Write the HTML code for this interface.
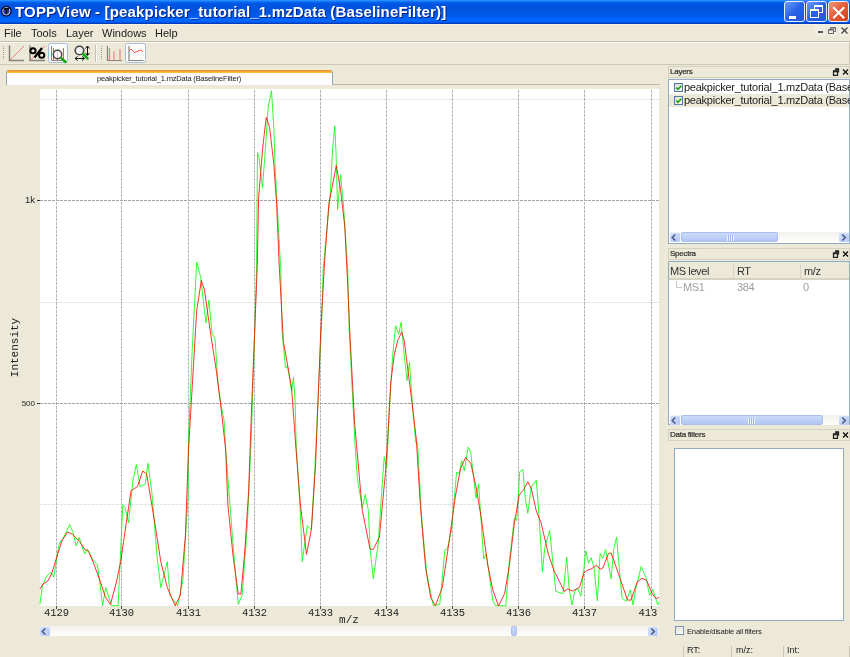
<!DOCTYPE html>
<html><head><meta charset="utf-8">
<style>
*{margin:0;padding:0;box-sizing:border-box}
html,body{width:850px;height:657px;overflow:hidden;background:#ECE9D8;font-family:"Liberation Sans",sans-serif;position:relative}
.abs{position:absolute}
.txt{white-space:nowrap;will-change:transform}
#title{left:0;top:0;width:850px;height:24px;background:linear-gradient(#3D95FF 0px,#0A78FF 1.5px,#0058E6 3px,#0054DF 5px,#0055E0 12px,#005DF0 17px,#0066FF 19px,#0066FF 21.5px,#0048D0 23px,#0030A8 24px)}
#title .t{will-change:transform;left:15px;top:3px;color:#fff;font-weight:bold;font-size:15px;letter-spacing:0.16px;white-space:nowrap;text-shadow:1px 1px 0 #0a1e7a}
.wb{position:absolute;top:1px;width:21px;height:21px;border:1px solid #E8EEFA;border-radius:3px}
#menu{left:0;top:24px;width:850px;height:18px;background:#ECE9D8;border-top:1px solid #F6F2DF;border-bottom:1px solid #C5C2B2}
#menu span{will-change:transform;position:absolute;top:2px;font-size:11px;color:#222}
#tool{left:0;top:42px;width:850px;height:23px;background:#ECE9D8;border-top:1px solid #F8F6EE;border-bottom:1px solid #CDC9B6;border-right:1px solid #CDC9B6}
.dock{position:absolute;left:668px;width:182px;height:12px;background:#ECE9D8;border:1px solid #D5D1C0;font-size:8px;color:#222}
.dock span{will-change:transform;position:absolute;left:0.5px;top:-0.5px;font-size:8px;letter-spacing:-0.25px;color:#2a2a2a;-webkit-text-stroke:0.2px #2a2a2a}
.frame{position:absolute;background:#fff;border:1px solid #94ABC6}
.hsb{position:absolute;height:10px;background:linear-gradient(#F3F1EC,#FEFEFB)}
.arr{position:absolute;top:0.5px;width:9.5px;height:9px;background:linear-gradient(135deg,#D5E1FC,#B5C8F6);border-radius:1.5px}
.cb{position:absolute;width:9px;height:9px;border:1px solid #4F78A8;background:linear-gradient(135deg,#DDDDD5,#FAFAF7)}
.lt{font-size:11px;color:#222;letter-spacing:-0.25px}
.hd{font-size:11px;color:#333;letter-spacing:-0.4px}
.thumb{position:absolute;top:0;height:10px;background:linear-gradient(#CCDAF8,#B2C7F5);border:1px solid #A9BEE9;border-radius:2px}
</style></head><body>
<div id="title" class="abs">
  <svg class="abs" style="left:0;top:5px" width="13" height="13"><circle cx="6.3" cy="6.2" r="4.9" fill="#2a3aa8" stroke="#0a0c30" stroke-width="1.2"/><circle cx="6.3" cy="6.2" r="3.6" fill="none" stroke="#D8DDF5" stroke-width="0.9"/><path d="M3.6 3.9H9M6.3 3.9V9.2" stroke="#111" stroke-width="1.6"/></svg>
  <div class="abs t">TOPPView - [peakpicker_tutorial_1.mzData (BaselineFilter)]</div>
  <div class="wb" style="left:784px;background:linear-gradient(135deg,#6C9BFB,#2A63E8 50%,#1F54D8)"><div class="abs" style="left:4px;top:13.5px;width:7px;height:3px;background:#fff"></div></div>
  <div class="wb" style="left:806px;background:linear-gradient(135deg,#6C9BFB,#2A63E8 50%,#1F54D8)"><div class="abs" style="left:7px;top:3px;width:9px;height:8px;border:1px solid #fff;border-top-width:2px"></div><div class="abs" style="left:3px;top:7px;width:9px;height:9px;border:1px solid #fff;border-top-width:2px;background:#2A60E6"></div></div>
  <div class="wb" style="left:828px;background:linear-gradient(135deg,#F09A7C,#E25B34 50%,#D1421B)"><svg class="abs" style="left:3px;top:3.5px" width="14" height="14"><path d="M1.2 1.2L12.2 12.2M12.2 1.2L1.2 12.2" stroke="#fff" stroke-width="2"/></svg></div>
</div>
<div id="menu" class="abs">
  <span style="left:4px">File</span>
  <span style="left:31px">Tools</span>
  <span style="left:66px">Layer</span>
  <span style="left:102px">Windows</span>
  <span style="left:155px">Help</span>
</div>
<!-- mdi buttons -->
<div class="abs" style="left:815px;top:25px;width:10px;height:11px;background:#F1EFE4"><div class="abs" style="left:2.5px;top:6px;width:5px;height:1.6px;background:#555"></div></div>
<div class="abs" style="left:827px;top:25px;width:10px;height:11px;background:#F1EFE4"><svg class="abs" style="left:1px;top:2px" width="8" height="7"><path d="M2.5 2V.5h5v4H6M.5 2.5h5v4h-5z" fill="none" stroke="#666"/><path d="M.5 3h5M2.5 1h5" stroke="#666"/></svg></div>
<div class="abs" style="left:839px;top:25px;width:10px;height:11px;background:#F1EFE4"><svg class="abs" style="left:2px;top:2px" width="7" height="7"><path d="M.5.5l6 6M6.5.5l-6 6" stroke="#444" stroke-width="1.3"/></svg></div>
<div id="tool" class="abs"></div>

<!-- toolbar -->
<svg class="abs" style="left:0;top:43px" width="160" height="22">
  <g fill="#9c9a90"><rect x="3" y="3" width="1" height="1"/><rect x="3" y="5" width="1" height="1"/><rect x="3" y="7" width="1" height="1"/><rect x="3" y="9" width="1" height="1"/><rect x="3" y="11" width="1" height="1"/><rect x="3" y="13" width="1" height="1"/><rect x="3" y="15" width="1" height="1"/>
  <rect x="101" y="3" width="1" height="1"/><rect x="101" y="5" width="1" height="1"/><rect x="101" y="7" width="1" height="1"/><rect x="101" y="9" width="1" height="1"/><rect x="101" y="11" width="1" height="1"/><rect x="101" y="13" width="1" height="1"/><rect x="101" y="15" width="1" height="1"/></g>
  <!-- icon1 -->
  <path d="M9.5 2.5V17.5H24" stroke="#85837a" stroke-width="1.5" fill="none"/>
  <path d="M10 17L24 3" stroke="#F08080" stroke-width="1"/>
  <!-- icon2 -->
  <path d="M30 2.5V17.5H45" stroke="#85837a" stroke-width="1.5" fill="none"/>
  <path d="M30.5 17L45 3" stroke="#F08080" stroke-width="1"/>
  <ellipse cx="33" cy="7.8" rx="2.6" ry="2.5" fill="none" stroke="#000" stroke-width="2"/><ellipse cx="41.7" cy="12.2" rx="2.6" ry="2.5" fill="none" stroke="#000" stroke-width="2"/><path d="M34.5 14.5L42 5" stroke="#000" stroke-width="2.2"/>
  <!-- icon3 checked -->
  <rect x="48.5" y="0.5" width="19" height="19" rx="2" fill="#FBFBF9" stroke="#A6BCD8"/>
  <path d="M51.5 3V17.5H66" stroke="#85837a" stroke-width="1" fill="none"/>
  <path d="M53.5 5V17M57.5 9V17M63.5 5V17" stroke="#F05050" stroke-width="1"/>
  <circle cx="57.5" cy="11.5" r="4.2" fill="rgba(255,255,255,0.6)" stroke="#444" stroke-width="1.5"/>
  <path d="M61 15L65.5 19" stroke="#11AA11" stroke-width="2.5" stroke-linecap="round"/>
  <!-- icon4 -->
  <circle cx="79.5" cy="7.5" r="4.3" fill="#f2f2f2" stroke="#444" stroke-width="1.6"/>
  <path d="M83 11L87.5 15.5" stroke="#11AA11" stroke-width="2.5" stroke-linecap="round"/>
  <path d="M87.5 3.5V12M85.5 5.5L87.5 3L89.5 5.5M85.5 10L87.5 12.5L89.5 10" stroke="#111" stroke-width="1" fill="none"/>
  <path d="M75.5 15.5H84M77.5 13.5L75 15.5L77.5 17.5M82 13.5L84.5 15.5L82 17.5" stroke="#111" stroke-width="1" fill="none"/>
  <!-- separator -->
  <rect x="95" y="2" width="1" height="17" fill="#C5C2B2"/><rect x="96" y="2" width="1" height="17" fill="#fff"/>
  <!-- icon5 -->
  <path d="M107.5 3V17.5H122" stroke="#85837a" stroke-width="1.2" fill="none"/>
  <path d="M109.5 5V17M114 8.5V17M120 6V17" stroke="#F08080" stroke-width="1.2"/>
  <!-- icon6 checked -->
  <rect x="125.5" y="0.5" width="20" height="19" rx="2" fill="#FBFBF9" stroke="#A6BCD8"/>
  <path d="M129 3V17.5H143.5" stroke="#85837a" stroke-width="1.2" fill="none"/>
  <path d="M129.5 7.5L131 6L134.5 9.5L141 7L143 9" stroke="#F05050" stroke-width="1" fill="none"/>
</svg>
<svg class="abs" style="left:0;top:0" width="850" height="657">
<rect x="40" y="89" width="619" height="517" fill="#fff"/>
<path d="M40 99.5H659" stroke="#E4E4E4" stroke-dasharray="3 1"/>
<path d="M40 302.5H659" stroke="#E4E4E4" stroke-dasharray="3 1"/>
<path d="M40 504.5H659" stroke="#E4E4E4" stroke-dasharray="3 1"/>
<path d="M40 200.5H659" stroke="#A4A4A4" stroke-dasharray="3 1"/>
<path d="M37 200.5H40" stroke="#333"/>
<path d="M40 403.5H659" stroke="#A4A4A4" stroke-dasharray="3 1"/>
<path d="M37 403.5H40" stroke="#333"/>
<path d="M56.5 90V606" stroke="#B4B4B4" stroke-dasharray="3 1"/>
<path d="M56.5 606V609" stroke="#444"/>
<path d="M121.5 90V606" stroke="#B4B4B4" stroke-dasharray="3 1"/>
<path d="M121.5 606V609" stroke="#444"/>
<path d="M188.5 90V606" stroke="#B4B4B4" stroke-dasharray="3 1"/>
<path d="M188.5 606V609" stroke="#444"/>
<path d="M254.5 90V606" stroke="#B4B4B4" stroke-dasharray="3 1"/>
<path d="M254.5 606V609" stroke="#444"/>
<path d="M320.5 90V606" stroke="#B4B4B4" stroke-dasharray="3 1"/>
<path d="M320.5 606V609" stroke="#444"/>
<path d="M386.5 90V606" stroke="#B4B4B4" stroke-dasharray="3 1"/>
<path d="M386.5 606V609" stroke="#444"/>
<path d="M452.5 90V606" stroke="#B4B4B4" stroke-dasharray="3 1"/>
<path d="M452.5 606V609" stroke="#444"/>
<path d="M518.5 90V606" stroke="#B4B4B4" stroke-dasharray="3 1"/>
<path d="M518.5 606V609" stroke="#444"/>
<path d="M584.5 90V606" stroke="#B4B4B4" stroke-dasharray="3 1"/>
<path d="M584.5 606V609" stroke="#444"/>
<path d="M651.5 90V606" stroke="#B4B4B4" stroke-dasharray="3 1"/>
<path d="M651.5 606V609" stroke="#444"/>
<polyline points="40,604 42.4,586 46,577 50.9,572 53.9,577 58.8,545 60.8,541 63.8,537 69.7,524.6 72.7,531.5 76.2,546 79.2,537.4 84.6,554 87.5,549 92.5,559 97.4,565 99.4,579 102.6,605.7 105.7,587.6 111.7,605.7 118.1,605.7 122.8,504.7 125.1,507.7 128.5,522.9 133,480 136.3,464.6 140.1,486.6 145.3,484 147.9,463.3 151.8,491.8 157,556.5 160.8,587.6 167.3,561.7 169.9,595.4 177.7,605.7 182.9,579.8 188,497 188.5,438.7 192.2,350.5 196.7,262.2 200.7,277.4 205.9,323 208.9,300.2 212,333.7 215,338.3 218,384 221.1,405.3 224.1,420.5 225.7,450 234.4,561.6 238.3,604.3 242.2,595.2 247.3,525.4 251.2,440 254.6,333.5 256.5,270 257.5,152.6 259.1,158.2 262.5,187.8 265.9,141.3 268.2,107.5 271.5,90.6 273.8,127.2 275.2,169.5 278,220.2 280.8,270 282,330.8 285.5,367.7 287.5,366.4 291.6,391 293.5,377.3 295.1,402 296.2,445 300.4,512.4 302.2,561.6 307.3,525.5 311.4,529.6 314.7,472 321.7,320 323.1,270 330.4,192 332.5,150 334.8,126 336.1,154.5 337.6,209.4 340.5,174.7 343.4,203.6 347.7,270 349.2,330 355,444.6 357.4,478.7 362.3,507.9 365.2,494.5 368.4,510.4 370.1,549.3 373.3,578.6 378.1,544.5 381.8,490.9 384.2,456.8 386.6,468.3 389.5,407.4 392.6,356.3 395.6,325.8 398.7,334.4 401.2,322.2 404.1,353.8 407,380.6 409.5,362.4 412.6,407.4 415.8,442.7 417.5,442.7 421.6,517.6 426.8,574.5 433.3,605.6 439.8,604.3 444.9,550 447.5,548.7 451.4,530.6 456.6,472.3 459.2,473.6 461.7,460.7 464.3,471 468.2,447.2 470.8,452.9 476,498.2 478.6,484 483.7,559 486.3,553.8 492.8,600.4 495.4,605.6 505.8,605.9 509.5,559.6 514.4,518.2 516.8,520.6 519.7,471.9 522.9,469.5 525.3,498.7 527.8,513.3 531.4,486.5 536.3,480.4 538.7,510.9 542.4,571.8 544.8,547.4 549.7,530.4 553.3,566.9 555.8,591.3 563.1,593.7 566.7,557.2 569.2,588.8 572,605 574.8,591.2 577.5,588.5 581,596 585.8,550.8 588.5,563.2 591.2,557.7 594,568 597.4,600.8 600.1,553.6 602.9,558.4 605.6,549.5 611.1,578.9 613.8,548.8 616.6,537.1 618.6,561.1 622.1,598 626.2,601.5 630.3,589.9 633,604.9 635.8,588.5 641.2,566.6 646,577.5 649.5,595.3 652.9,589.2 657.7,604.9 659,602" fill="none" stroke="#00FF00" stroke-width="0.8"/>
<polyline points="40,588.9 43,584 47.9,581 51.9,573 56.8,557 61.8,541 67.7,532 72.7,534.5 79.6,541.4 84.6,549.3 88.5,551.3 93.5,563 99.4,579 105.3,596.8 110.4,604.4 116.2,583 120.7,561.7 125.9,525.4 131.1,490.5 137.5,486.6 142.7,471 146.6,473.7 154.4,520.3 160.8,561.7 167.3,587.6 175.1,605.7 180.3,595.4 185.4,535.8 188.5,450 192.2,387 196.7,310.9 201.3,280.4 204.4,289.6 210.4,332.2 216.5,371.8 221.1,408.3 225.7,450 227.9,504.7 233.1,556.4 238.3,594 240.9,594 244.8,551.3 248.6,491.7 251.8,402 254.6,333.5 257.3,265 258.6,197.6 262.8,147 266.2,117.4 269.6,127.2 273.8,163.9 276.6,203.3 279.2,265 283.4,341.7 288.8,371.8 291.6,388.3 295.7,445 300.4,504.7 306.5,554.3 311.4,529.6 315.6,463.9 320.8,330 324.6,261.5 328.9,203.6 336.3,165.5 340.5,189.2 344.8,226.8 347.7,284.6 349.7,330 354.6,422.8 362.3,510.4 370.1,549.3 373.3,549.3 379.4,537.2 383,498.2 385.4,473.8 387.9,434.9 390.7,383 394.4,353.8 397.8,340.5 401.7,331.9 404.3,341 406.5,358.7 411.4,397.7 416.3,439 420.3,504.7 425.5,566.8 430.7,597.8 435.4,605.6 442.3,587.5 448.8,543.5 455.3,496.9 460.5,468.5 465.6,457.6 470.8,463.3 476,486.6 481.2,517.6 487.6,564.2 492.8,590 498.5,605.9 504.6,593.7 509.5,564.5 514.4,523 519.2,495 524.1,489 527.8,481.7 531.4,489 536.3,510.9 541.1,523 548.5,554.7 554.5,571.8 559.4,581.5 564.3,591.3 567.9,588.8 572.7,591.2 579.6,587.1 583.7,573.4 586.4,570.7 591.9,568.6 596.7,565.2 600.1,569.3 602.9,567.9 608.4,553.6 611.1,552.9 617.9,572.1 622.1,584.4 627.5,600.1 631,600.1 637.1,582.3 641.9,578.2 646.7,580.3 652.2,594 656.3,598.8 659,597.4" fill="none" stroke="#FF0000" stroke-width="0.8"/>
</svg>
<svg class="abs" style="left:0;top:0;will-change:transform" width="850" height="657">
<text x="56.5" y="616" text-anchor="middle" font-family="Liberation Mono" font-size="10.5" fill="#222">4129</text>
<text x="121.5" y="616" text-anchor="middle" font-family="Liberation Mono" font-size="10.5" fill="#222">4130</text>
<text x="188.5" y="616" text-anchor="middle" font-family="Liberation Mono" font-size="10.5" fill="#222">4131</text>
<text x="254.5" y="616" text-anchor="middle" font-family="Liberation Mono" font-size="10.5" fill="#222">4132</text>
<text x="320.5" y="616" text-anchor="middle" font-family="Liberation Mono" font-size="10.5" fill="#222">4133</text>
<text x="386.5" y="616" text-anchor="middle" font-family="Liberation Mono" font-size="10.5" fill="#222">4134</text>
<text x="452.5" y="616" text-anchor="middle" font-family="Liberation Mono" font-size="10.5" fill="#222">4135</text>
<text x="518.5" y="616" text-anchor="middle" font-family="Liberation Mono" font-size="10.5" fill="#222">4136</text>
<text x="584.5" y="616" text-anchor="middle" font-family="Liberation Mono" font-size="10.5" fill="#222">4137</text>
<text x="638.5" y="616" text-anchor="start" font-family="Liberation Mono" font-size="10.5" fill="#222">413</text>
<text x="349" y="622.5" text-anchor="middle" font-family="Liberation Mono" font-size="11" fill="#222">m/z</text>
<text x="35" y="203.3" text-anchor="end" font-family="Liberation Sans" font-size="9.5" fill="#222">1k</text>
<text x="35" y="406" text-anchor="end" font-family="Liberation Sans" font-size="8" fill="#222">500</text>
<text transform="translate(17.5 347.5) rotate(-90)" text-anchor="middle" font-family="Liberation Mono" font-size="11" fill="#222">Intensity</text>
</svg>
<!-- tab -->
<div class="abs" style="left:6px;top:70px;width:327px;height:15px;background:#FCFCFE;border-left:1px solid #91A7B4;border-right:1px solid #91A7B4;border-radius:3px 3px 0 0;overflow:hidden">
  <div class="abs" style="left:0;top:0;width:100%;height:3px;background:linear-gradient(#E68B2C,#FFC73C)"></div>
  <div class="abs txt" style="left:90px;top:3.5px;font-size:7.5px;letter-spacing:-0.17px;color:#222">peakpicker_tutorial_1.mzData (BaselineFilter)</div>
</div>
<div class="abs" style="left:333px;top:84px;width:327px;height:1px;background:#BDB9A5"></div>
<!-- docks -->
<div class="dock" style="top:66px"><span>Layers</span><svg class="abs" style="left:163px;top:1px" width="17" height="8"><path d="M1.5 3.5h4v4h-4z M3.5 1.5h3v3" fill="none" stroke="#222" stroke-width="1.3"/><path d="M1 3h5M3 1h4" stroke="#222" stroke-width="1.5"/><path d="M11 1.5l5 5M16 1.5l-5 5" stroke="#111" stroke-width="1.3"/></svg></div>
<div class="frame" style="left:668px;top:79px;width:182px;height:165px">
  <div class="abs" style="left:0;top:14px;width:180px;height:13px;background:#ECE9D8"></div>
  <div class="cb" style="left:5px;top:3px"><svg class="abs" style="left:0;top:0" width="8" height="8"><path d="M1.3 3.6L2.9 5.3L6.3 1.8" fill="none" stroke="#21A121" stroke-width="1.7"/></svg></div>
  <div class="abs txt lt" style="left:15px;top:1px">peakpicker_tutorial_1.mzData (BaselineFilter)</div>
  <div class="cb" style="left:5px;top:16px"><svg class="abs" style="left:0;top:0" width="8" height="8"><path d="M1.3 3.6L2.9 5.3L6.3 1.8" fill="none" stroke="#21A121" stroke-width="1.7"/></svg></div>
  <div class="abs txt lt" style="left:15px;top:14px">peakpicker_tutorial_1.mzData (BaselineFilter)</div>
  <div class="hsb" style="left:1px;top:152px;width:179px">
    <div class="arr" style="left:0px"><svg width="9" height="9" style="position:absolute;left:0;top:0"><path d="M5.3 1.5L2.3 4.5L5.3 7.5" fill="none" stroke="#4A5F8A" stroke-width="1.7"/></svg></div>
    <div class="thumb" style="left:11px;width:97px"><svg style="position:absolute;left:45px;top:2px" width="7" height="6"><path d="M0.5 0V6M2.5 0V6M4.5 0V6M6.5 0V6" stroke="#EEF3FE" stroke-width="1"/><path d="M1.5 0V6M3.5 0V6M5.5 0V6" stroke="#9DB6EA" stroke-width="1"/></svg></div>
    <div class="arr" style="left:169px"><svg width="9" height="9" style="position:absolute;left:0;top:0"><path d="M3.2 1.5L6.2 4.5L3.2 7.5" fill="none" stroke="#4A5F8A" stroke-width="1.7"/></svg></div>
  </div>
</div>
<div class="dock" style="top:248px"><span>Spectra</span><svg class="abs" style="left:163px;top:1px" width="17" height="8"><path d="M1.5 3.5h4v4h-4z M3.5 1.5h3v3" fill="none" stroke="#222" stroke-width="1.3"/><path d="M1 3h5M3 1h4" stroke="#222" stroke-width="1.5"/><path d="M11 1.5l5 5M16 1.5l-5 5" stroke="#111" stroke-width="1.3"/></svg></div>
<div class="frame" style="left:668px;top:261px;width:182px;height:164px">
  <div class="abs" style="left:0;top:0;width:180px;height:18px;background:#ECE9D8;border-bottom:2px solid #D6D2C2"></div>
  <div class="abs" style="left:64px;top:3px;width:1px;height:13px;background:#D6D2C2"></div>
  <div class="abs" style="left:131px;top:3px;width:1px;height:13px;background:#D6D2C2"></div>
  <div class="abs txt hd" style="left:1px;top:3px">MS level</div>
  <div class="abs txt hd" style="left:68px;top:3px">RT</div>
  <div class="abs txt hd" style="left:135px;top:3px">m/z</div>
  <div class="abs" style="left:7px;top:19px;width:1px;height:7px;border-left:1px solid #C8C8C8"></div>
  <div class="abs" style="left:7px;top:25px;width:6px;height:1px;border-top:1px solid #C8C8C8"></div>
  <div class="abs txt hd" style="left:14px;top:19px;color:#A0A0A0">MS1</div>
  <div class="abs txt hd" style="left:68px;top:19px;color:#A0A0A0">384</div>
  <div class="abs txt hd" style="left:134px;top:19px;color:#A0A0A0">0</div>
  <div class="hsb" style="left:1px;top:153px;width:179px">
    <div class="arr" style="left:0px"><svg width="9" height="9" style="position:absolute;left:0;top:0"><path d="M5.3 1.5L2.3 4.5L5.3 7.5" fill="none" stroke="#4A5F8A" stroke-width="1.7"/></svg></div>
    <div class="thumb" style="left:11px;width:142px"><svg style="position:absolute;left:66px;top:2px" width="7" height="6"><path d="M0.5 0V6M2.5 0V6M4.5 0V6M6.5 0V6" stroke="#EEF3FE" stroke-width="1"/><path d="M1.5 0V6M3.5 0V6M5.5 0V6" stroke="#9DB6EA" stroke-width="1"/></svg></div>
    <div class="arr" style="left:169px"><svg width="9" height="9" style="position:absolute;left:0;top:0"><path d="M3.2 1.5L6.2 4.5L3.2 7.5" fill="none" stroke="#4A5F8A" stroke-width="1.7"/></svg></div>
  </div>
</div>
<div class="dock" style="top:429px"><span>Data filters</span><svg class="abs" style="left:163px;top:1px" width="17" height="8"><path d="M1.5 3.5h4v4h-4z M3.5 1.5h3v3" fill="none" stroke="#222" stroke-width="1.3"/><path d="M1 3h5M3 1h4" stroke="#222" stroke-width="1.5"/><path d="M11 1.5l5 5M16 1.5l-5 5" stroke="#111" stroke-width="1.3"/></svg></div>
<div class="frame" style="left:674px;top:448px;width:170px;height:173px"></div>
<div class="abs" style="left:675px;top:626px;width:9px;height:9px;border:1px solid #7C94B4;background:linear-gradient(135deg,#E3E2DA,#FBFBF8)"></div>
<div class="abs txt" style="left:687px;top:627px;font-size:7.6px;color:#222;letter-spacing:-0.2px">Enable/disable all filters</div>
<div class="abs" style="left:683px;top:646px;width:1px;height:11px;background:#C9C5B2"></div>
<div class="abs" style="left:731px;top:646px;width:1px;height:11px;background:#C9C5B2"></div>
<div class="abs" style="left:783px;top:646px;width:1px;height:11px;background:#C9C5B2"></div>
<div class="abs" style="left:849px;top:646px;width:1px;height:11px;background:#C9C5B2"></div>
<div class="abs txt" style="left:687px;top:645px;font-size:9px;color:#222">RT:</div>
<div class="abs txt" style="left:736px;top:645px;font-size:9px;color:#222">m/z:</div>
<div class="abs txt" style="left:787px;top:645px;font-size:9px;color:#222">Int:</div>
<!-- main hscroll -->
<div class="hsb" style="left:40px;top:626px;width:619px">
  <div class="arr" style="left:0"><svg width="9" height="9" style="position:absolute;left:0;top:0"><path d="M5.3 1.5L2.3 4.5L5.3 7.5" fill="none" stroke="#4A5F8A" stroke-width="1.7"/></svg></div>
  <div class="thumb" style="left:471px;width:6px"></div>
  <div class="arr" style="left:608px"><svg width="9" height="9" style="position:absolute;left:0;top:0"><path d="M3.2 1.5L6.2 4.5L3.2 7.5" fill="none" stroke="#4A5F8A" stroke-width="1.7"/></svg></div>
</div>
</body></html>
